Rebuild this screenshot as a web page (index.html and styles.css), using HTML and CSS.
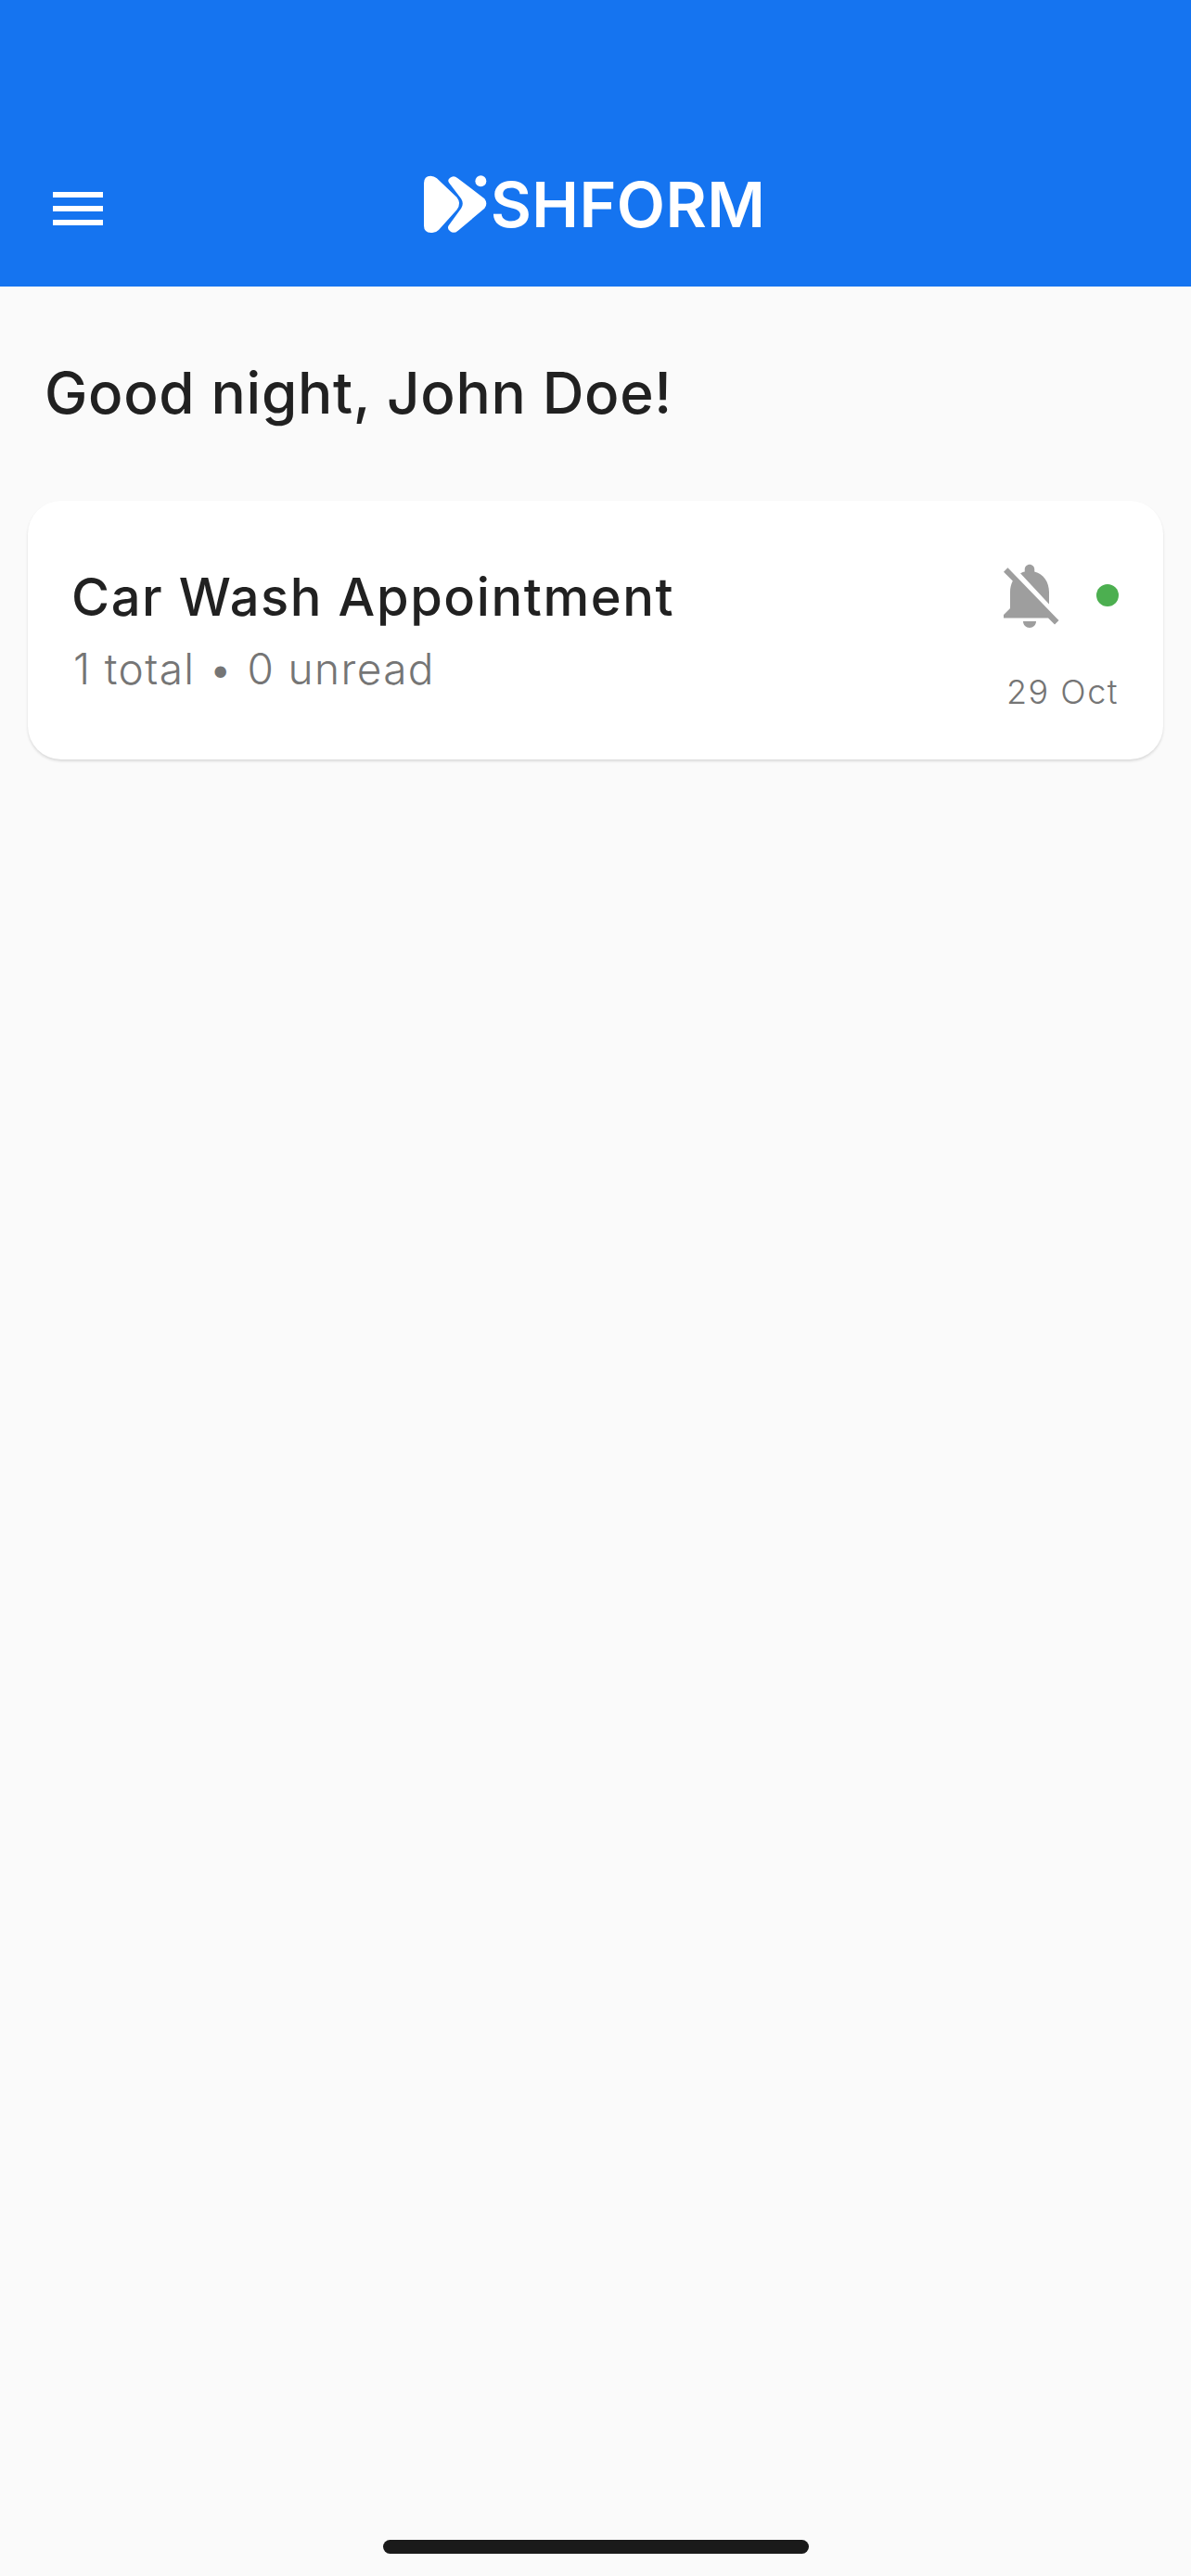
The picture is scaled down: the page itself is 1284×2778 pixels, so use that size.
FILE: index.html
```html
<!DOCTYPE html>
<html lang="en">

<head>
    <meta charset="UTF-8">
    <meta name="viewport" content="width=device-width, initial-scale=1.0">
    <title>Dashform</title>
    <link rel="stylesheet" href="styles.css">
</head>

<body>

    <!-- Top bar -->
    <header class="topbar">
        <div class="menu-icon">
            <span></span>
            <span></span>
            <span></span>
        </div>
        <div class="logo">
            <svg class="logo-mark" viewBox="55 58 205 190" aria-hidden="true">
                <path d="M55 84Q55 60 77 60Q88 60 97 68L162 130Q178 150 162 170L103 236Q92 247 78 245Q55 243 55 222Z"/>
                <path d="M137 83Q130 73 140 66Q152 56 165 68L252 134Q264 150 252 166L166 238Q152 250 140 240Q128 230 137 219L176 166Q186 150 176 134Z"/>
                <circle cx="240" cy="77" r="18"/>
            </svg>
            <span class="logo-text">SHFORM</span>
        </div>
    </header>

    <main class="content">
        <h1 class="greeting">Good night, John Doe!</h1>

        <!-- Form card -->
        <div class="card">
            <div class="card-info">
                <h2 class="card-title">Car Wash Appointment</h2>
                <p class="card-sub">1 total • 0 unread</p>
            </div>
            <div class="card-meta">
                <div class="card-status">
                    <svg class="bell" viewBox="0 0 24 24" aria-hidden="true">
                        <path d="M20 18.69L7.84 6.14 5.27 3.49 4 4.76l2.8 2.8v.01c-.52.99-.8 2.16-.8 3.42v5l-2 2v1h13.73l2 2L21 19.72l-1-1.03zM12 22c1.11 0 2-.89 2-2h-4c0 1.11.89 2 2 2zm6-7.32V11c0-3.08-1.64-5.64-4.5-6.32V4c0-.83-.67-1.5-1.5-1.5s-1.5.67-1.5 1.5v.68c-.15.03-.29.08-.42.12-.1.03-.2.07-.3.11h-.01c-.2.08-.4.17-.59.27-.01 0-.01 0-.02.01L18 14.68z"/>
                    </svg>
                    <span class="dot"></span>
                </div>
                <span class="card-date">29 Oct</span>
            </div>
        </div>
    </main>

    <!-- Home indicator -->
    <div class="home-bar"></div>

</body>

</html>
```

FILE: styles.css
```css
/* Base */
html,
body {
    margin: 0;
    padding: 0;
    height: 100%;
}

body {
    display: flex;
    flex-direction: column;
    min-height: 2778px;
    background-color: #fafafa;
    color: #212121;
    font-family: Inter, "Liberation Sans", sans-serif;
}

/* Top bar */
.topbar {
    display: grid;
    grid-template-columns: 1fr auto 1fr;
    align-items: end;
    height: 309px;
    box-sizing: border-box;
    padding: 0 59px 57px 57px;
    background-color: #1574f0;
}

.menu-icon {
    display: flex;
    flex-direction: column;
    gap: 9px;
    width: 54px;
    margin-bottom: 9px;
}

.menu-icon span {
    display: block;
    height: 6px;
    background-color: white;
}

.logo {
    display: flex;
    align-items: center;
    gap: 4px;
    color: white;
}

.logo-mark {
    width: 68px;
    height: 63px;
    fill: white;
}

.logo-text {
    font-size: 68px;
    font-weight: 600;
    letter-spacing: 0.4px;
    line-height: 63px;
}

/* Content */
.content {
    flex: 1;
    padding: 0 30px;
}

.greeting {
    margin: 0;
    padding: 81px 0 0 18px;
    height: 149px;
    box-sizing: border-box;
    font-size: 62px;
    font-weight: 500;
    letter-spacing: 0.7px;
    line-height: 67px;
}

/* Card */
.card {
    display: flex;
    justify-content: space-between;
    height: 279px;
    margin-top: 82px;
    box-sizing: border-box;
    padding: 60px 48px 0 47px;
    background-color: white;
    border-radius: 36px;
    box-shadow: 0 2px 3px rgba(0, 0, 0, 0.13);
}

.card-title {
    margin: 6px 0 0;
    font-size: 56px;
    font-weight: 500;
    letter-spacing: 1.6px;
    line-height: 76px;
}

.card-sub {
    margin: 9px 0 0 2px;
    color: #757575;
    font-size: 46px;
    font-weight: 300;
    letter-spacing: 1.4px;
    line-height: 60px;
}

.card-meta {
    display: flex;
    flex-direction: column;
    align-items: flex-end;
}

.card-status {
    display: flex;
    align-items: center;
    gap: 30px;
}

.bell {
    width: 84px;
    height: 84px;
    fill: #9e9e9e;
}

.dot {
    width: 24px;
    height: 24px;
    border-radius: 50%;
    background-color: #4caf50;
}

.card-date {
    margin-top: 40px;
    color: #757575;
    font-size: 36px;
    font-weight: 300;
    letter-spacing: 1.5px;
    line-height: 44px;
}

/* Home indicator */
.home-bar {
    align-self: center;
    width: 459px;
    height: 15px;
    margin-bottom: 24px;
    border-radius: 8px;
    background-color: #1a1a1a;
}
```
